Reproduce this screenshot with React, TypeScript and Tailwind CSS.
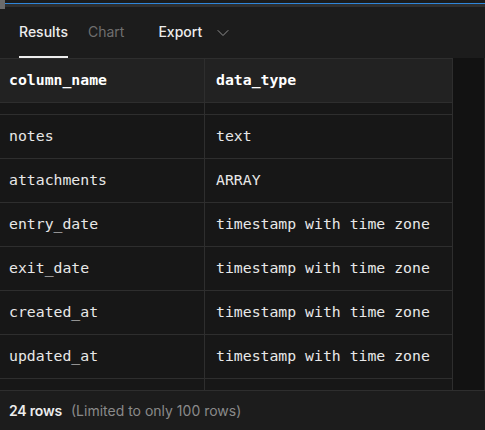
import { ChevronDown } from 'lucide-react'

const rows = [
  { name: 'notes', type: 'text' },
  { name: 'attachments', type: 'ARRAY' },
  { name: 'entry_date', type: 'timestamp with time zone' },
  { name: 'exit_date', type: 'timestamp with time zone' },
  { name: 'created_at', type: 'timestamp with time zone' },
  { name: 'updated_at', type: 'timestamp with time zone' },
]

const mono = { fontFamily: '"DejaVu Sans Mono", "Liberation Mono", monospace' }
const sans = { fontFamily: 'Inter, "Noto Sans", sans-serif' }

export default function App() {
  return (
    <div className="w-[485px] h-[430px] bg-[#1c1c1c] flex flex-col overflow-hidden relative" style={sans}>
      {/* top strip */}
      <div className="h-[3px] bg-[#1c1c1c]" />
      <div className="h-px bg-[#2f86d9]" />
      <div className="h-[3px] bg-[#2f2f2f]" />
      <div className="absolute left-0 top-0 w-[5px] h-[9px] bg-[#6b6b6b]" />

      {/* tabs */}
      <div className="h-[51px] flex items-stretch pl-[19px] text-[14px]">
        <div className="relative flex items-center pb-[2px] text-[#ededed] font-medium">
          Results
          <div className="absolute left-0 right-0 bottom-0 h-[2px] bg-[#ededed]" />
        </div>
        <div className="flex items-center pb-[2px] ml-[20px] text-[#6f6f6f]">Chart</div>
        <div className="flex items-center pb-[2px] ml-[34px] text-[#ededed] font-medium gap-[11px]">
          Export
          <ChevronDown size={20} strokeWidth={1.2} className="text-[#8f8f8f] mt-[2px]" />
        </div>
      </div>

      {/* table */}
      <div className="flex-1 flex min-h-0">
        <div className="w-[453px] flex flex-col bg-[#171717] border-r border-[#2e2e2e]">
          <div className="h-[45px] flex bg-[#222222] border-y border-[#2e2e2e] text-[14.8px] font-bold text-white" style={mono}>
            <div className="w-[205px] border-r border-[#2e2e2e] flex items-center pl-[9px]">column_name</div>
            <div className="flex-1 flex items-center pl-[11px]">data_type</div>
          </div>
          <div className="h-[12px] flex border-b border-[#2e2e2e]">
            <div className="w-[205px] border-r border-[#2e2e2e]" />
          </div>
          {rows.map((r) => (
            <div key={r.name} className="h-[44px] flex border-b border-[#2e2e2e] text-[14.8px] text-[#e8e8e8]" style={mono}>
              <div className="w-[205px] border-r border-[#2e2e2e] flex items-center pl-[9px]">{r.name}</div>
              <div className="flex-1 flex items-center pl-[11px]">{r.type}</div>
            </div>
          ))}
          <div className="flex-1 flex">
            <div className="w-[205px] border-r border-[#2e2e2e]" />
          </div>
        </div>
        <div className="flex-1 bg-[#121212] border-r border-[#262626]" />
      </div>

      {/* footer */}
      <div className="h-[40px] border-t border-[#2e2e2e] flex items-center pl-[9px] text-[14px]">
        <span className="text-[#ededed] font-semibold tracking-[-0.2px]">24 rows</span>
        <span className="ml-[9px] text-[#8a8a8a]">(Limited to only 100 rows)</span>
      </div>
    </div>
  )
}
